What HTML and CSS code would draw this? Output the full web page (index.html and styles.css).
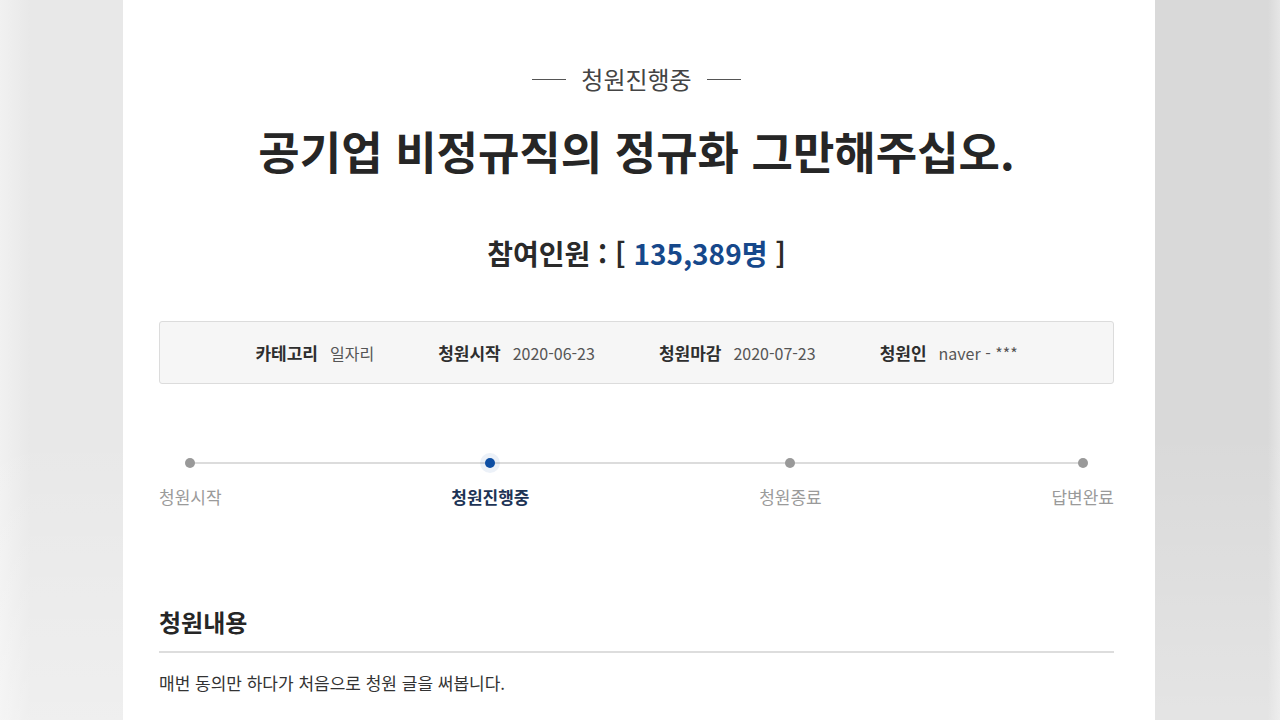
FILE: index.html
```html
<!DOCTYPE html>
<html lang="ko">
<head>
<meta charset="utf-8">
<title>청원진행중</title>
<link rel="stylesheet" href="styles.css">
</head>
<body>
<div class="page">
  <div class="panel">
    <div class="status"><span class="status-line"></span><span class="status-text">청원진행중</span><span class="status-line"></span></div>
    <h1 class="title">공기업 비정규직의 정규화 그만해주십오.</h1>
    <div class="count">참여인원 : [ <span class="count-num">135,389명</span> ]</div>
    <div class="info">
      <div class="info-item"><span class="info-label">카테고리</span><span class="info-value">일자리</span></div>
      <div class="info-item"><span class="info-label">청원시작</span><span class="info-value">2020-06-23</span></div>
      <div class="info-item"><span class="info-label">청원마감</span><span class="info-value">2020-07-23</span></div>
      <div class="info-item"><span class="info-label">청원인</span><span class="info-value">naver - ***</span></div>
    </div>
    <div class="progress">
      <div class="step"><span class="dot"></span><span class="step-label">청원시작</span></div>
      <div class="step active"><span class="dot"></span><span class="step-label">청원진행중</span></div>
      <div class="step"><span class="dot"></span><span class="step-label">청원종료</span></div>
      <div class="step"><span class="dot"></span><span class="step-label">답변완료</span></div>
    </div>
    <h2 class="section-title">청원내용</h2>
    <p class="content">매번 동의만 하다가 처음으로 청원 글을 써봅니다.</p>
  </div>
</div>
</body>
</html>
```
FILE: styles.css
```css
html, body {
  margin: 0;
  padding: 0;
  height: 100%;
}
body {
  font-family: "Noto Sans CJK KR", "Noto Sans", sans-serif;
  background:
    linear-gradient(to bottom, rgba(255,255,255,0) 0, rgba(255,255,255,0) 60%, rgba(255,255,255,0.3) 100%),
    linear-gradient(to right, #f1f1f1 0, #e8e8e8 30px, #e8e8e8 123px, #d9d9d9 1155px, #d9d9d9 1268px, #e6e6e6 1280px);
  overflow: hidden;
}
.page {
  display: flex;
  justify-content: flex-start;
  height: 100%;
}
.panel {
  margin-left: 123px;
  width: 1032px;
  box-sizing: border-box;
  padding: 64px 41px 0 36px;
  background: #ffffff;
  height: 100%;
}
.status {
  display: flex;
  justify-content: center;
  align-items: center;
  gap: 15px;
  height: 30px;
}
.status-text {
  font-size: 24px;
  line-height: 30px;
  color: #444;
}
.status-line {
  width: 34px;
  height: 1px;
  background: #555;
}
.title {
  margin: 32px 0 0 0;
  font-size: 45px;
  line-height: 50px;
  font-weight: 700;
  color: #262626;
  text-align: center;
}
.count {
  margin-top: 57px;
  font-size: 28px;
  line-height: 40px;
  font-weight: 700;
  color: #2a2a2a;
  text-align: center;
}
.count-num {
  color: #16488b;
}
.info {
  margin-top: 48px;
  height: 63px;
  box-sizing: border-box;
  border: 1px solid #dcdcdc;
  border-radius: 3px;
  background: #f6f6f6;
  display: flex;
  justify-content: center;
  align-items: center;
  gap: 64px;
}
.info-item {
  display: flex;
  align-items: center;
  line-height: 24px;
}
.info-label {
  font-size: 17px;
  font-weight: 700;
  color: #2e2e2e;
  margin-right: 12px;
}
.info-value {
  font-size: 16px;
  color: #555;
}
.progress {
  margin-top: 74px;
  display: flex;
  justify-content: space-between;
  position: relative;
}
.progress::before {
  content: "";
  position: absolute;
  left: 30px;
  right: 31px;
  top: 4px;
  height: 2px;
  background: #dcdcdc;
}
.step {
  display: flex;
  flex-direction: column;
  align-items: center;
  position: relative;
}
.dot {
  width: 10px;
  height: 10px;
  border-radius: 50%;
  background: #999;
}
.step.active .dot {
  background: #0d4ea3;
  box-shadow: 0 0 0 5px rgba(13, 78, 163, 0.08);
}
.step-label {
  margin-top: 17px;
  font-size: 17px;
  line-height: 24px;
  color: #9a9a9a;
}
.step.active .step-label {
  color: #1d3456;
  font-weight: 700;
}
.section-title {
  margin: 96px 0 0 0;
  font-size: 24px;
  line-height: 34px;
  font-weight: 700;
  color: #262626;
  padding-bottom: 12px;
  border-bottom: 2px solid #dddddd;
}
.content {
  margin: 18px 0 0 0;
  font-size: 17px;
  line-height: 24px;
  color: #333;
}
```
